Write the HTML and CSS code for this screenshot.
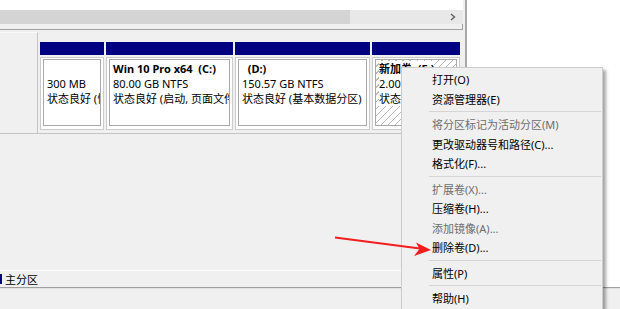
FILE: index.html
```html
<!DOCTYPE html>
<html lang="zh-CN">
<head>
<meta charset="utf-8">
<title>磁盘管理</title>
<link rel="stylesheet" href="styles.css">
</head>
<body>
<div class="screen">
  <div class="upper">
    <div class="main">
      <div class="list">
        <div class="list-body"></div>
        <div class="hscroll">
          <div class="thumb"></div>
          <svg class="chev" width="6" height="8" viewBox="0 0 6 8"><path d="M1 1 L4.5 4 L1 7" fill="none" stroke="#606060" stroke-width="1.4"/></svg>
        </div>
        <div class="list-foot"></div>
      </div>
      <div class="graph">
        <div class="disk">
          <div class="disk-label"></div>
          <div class="parts">
            <div class="part p1">
              <div class="part-head"></div>
              <div class="part-body"><div class="part-inner">
                <div class="ln title">&nbsp;</div>
                <div class="ln">300 MB</div>
                <div class="ln">状态良好 (恢复分区)</div>
              </div></div>
            </div>
            <div class="part p2">
              <div class="part-head"></div>
              <div class="part-body"><div class="part-inner">
                <div class="ln title">Win 10 Pro x64&nbsp;&nbsp;(C:)</div>
                <div class="ln">80.00 GB NTFS</div>
                <div class="ln">状态良好 (启动, 页面文件, 故障转储, 基本数据分区)</div>
              </div></div>
            </div>
            <div class="part p3">
              <div class="part-head"></div>
              <div class="part-body"><div class="part-inner">
                <div class="ln title">&nbsp;&nbsp;(D:)</div>
                <div class="ln">150.57 GB NTFS</div>
                <div class="ln">状态良好 (基本数据分区)</div>
              </div></div>
            </div>
            <div class="part p4 hatch">
              <div class="part-head"></div>
              <div class="part-body"><div class="part-inner">
                <div class="ln title"><span>新加卷&nbsp;&nbsp;(E:)</span></div>
                <div class="ln"><span>2.00 GB NTFS</span></div>
                <div class="ln"><span>状态良好 (基本数据分区)</span></div>
              </div></div>
            </div>
          </div>
        </div>
        <div class="spacer"></div>
        <div class="legend"><span class="swatch"></span><span>主分区</span></div>
      </div>
    </div>
    <div class="divider"></div>
    <div class="side"></div>
  </div>
  <div class="status"></div>

  <div class="menu">
    <div class="mi">打开(O)</div>
    <div class="mi">资源管理器(E)</div>
    <div class="sep"></div>
    <div class="mi dis">将分区标记为活动分区(M)</div>
    <div class="mi">更改驱动器号和路径(C)...</div>
    <div class="mi">格式化(F)...</div>
    <div class="sep"></div>
    <div class="mi dis">扩展卷(X)...</div>
    <div class="mi">压缩卷(H)...</div>
    <div class="mi dis">添加镜像(A)...</div>
    <div class="mi">删除卷(D)...</div>
    <div class="sep"></div>
    <div class="mi">属性(P)</div>
    <div class="sep"></div>
    <div class="mi">帮助(H)</div>
  </div>

  <svg class="arrow" width="620" height="309" viewBox="0 0 620 309">
    <line x1="335" y1="237.5" x2="420" y2="248.5" stroke="#f21d1d" stroke-width="2"/>
    <polygon points="431,250 416,242.5 419.5,249 414,256" fill="#f21d1d"/>
  </svg>
</div>
</body>
</html>
```
FILE: styles.css
```css
* { box-sizing: border-box; }
html, body { margin: 0; padding: 0; }
body {
  background: #f0f0f0;
  font-family: "Noto Sans", "Noto Sans CJK SC", sans-serif;
  font-size: 11px;
  color: #000;
  overflow: hidden;
}
.screen {
  position: relative;
  width: 620px;
  height: 309px;
  overflow: hidden;
  display: flex;
  flex-direction: column;
}
.upper { display: flex; height: 287px; }
.main {
  width: 465px;
  display: flex;
  flex-direction: column;
  background: #f0f0f0;
}
.divider { width: 2px; background: #a8a8a8; }
.side { flex: 1; background: #fff; }

/* list view with horizontal scrollbar */
.list {
  height: 30px;
  display: flex;
  flex-direction: column;
  border-bottom: 1px solid #a0a0a0;
  width: 463px;
}
.list-body { height: 10px; background: #fff; }
.hscroll {
  height: 14px;
  background: #e8e8e8;
  display: flex;
  align-items: center;
  justify-content: space-between;
}
.thumb { width: 350px; height: 100%; background: #d4d4d4; }
.chev { margin-right: 7px; }
.list-foot { flex: 1; background: #f0f0f0; border-right: 1px solid #a0a0a0; }

/* graphical view */
.graph {
  flex: 1;
  display: flex;
  flex-direction: column;
  padding-top: 2px;
}
.disk {
  display: flex;
  height: 102px;
  width: 462px;
  border-bottom: 1px solid #c4c4c4;
}
.disk-label {
  width: 38px;
  border-right: 1px solid #c4c4c4;
  border-top: 1px solid #fafafa;
}
.parts {
  display: flex;
  gap: 2px;
  padding: 10px 0 0 2px;
}
.part { display: flex; flex-direction: column; }
.p1 { width: 64px; }
.p2 { width: 127px; }
.p3 { width: 135px; }
.p4 { width: 88px; }
.part-head { height: 13px; background: #000080; }
.part-body {
  margin-top: 2px;
  height: 73px;
  border: 1px solid #cbcbcb;
  padding: 1px 2px 3px;
  background: #fff;
}
.part-inner {
  height: 100%;
  border: 1px solid #a9a9a9;
  padding: 1px 0 0 3px;
  overflow: hidden;
  white-space: nowrap;
  line-height: 15px;
}
.title { font-weight: 700; }
.hatch .part-inner {
  background: repeating-linear-gradient(135deg, #fff 0 4px, #b9b9b9 4px 5px);
}
.hatch .ln span { background: #fff; }

.spacer { flex: 1; }
.legend {
  height: 17px;
  border-top: 1px solid #fff;
  display: flex;
  align-items: center;
  gap: 3px;
  line-height: 15px;
}
.swatch { width: 2px; height: 10px; background: #000080; }

.status {
  flex: 1;
  border-top: 1px solid #a0a0a0;
  box-shadow: inset 0 1px #e2e2e2;
  background: #f0f0f0;
}

/* context menu */
.menu {
  position: absolute;
  left: 401px;
  top: 67px;
  width: 202px;
  height: 260px;
  background: #f0f0f0;
  border: 1px solid #cccccc;
  box-shadow: 3px 3px 3px rgba(0, 0, 0, 0.35);
  padding-top: 2px;
}
.mi {
  height: 19.5px;
  line-height: 19.5px;
  padding-left: 30px;
  white-space: nowrap;
}
.mi.dis { color: #6d6d6d; }
.sep {
  margin: 2px 1px 3px 27px;
  border-top: 1px solid #d5d5d5;
}

.arrow {
  position: absolute;
  left: 0;
  top: 0;
  pointer-events: none;
}
```
